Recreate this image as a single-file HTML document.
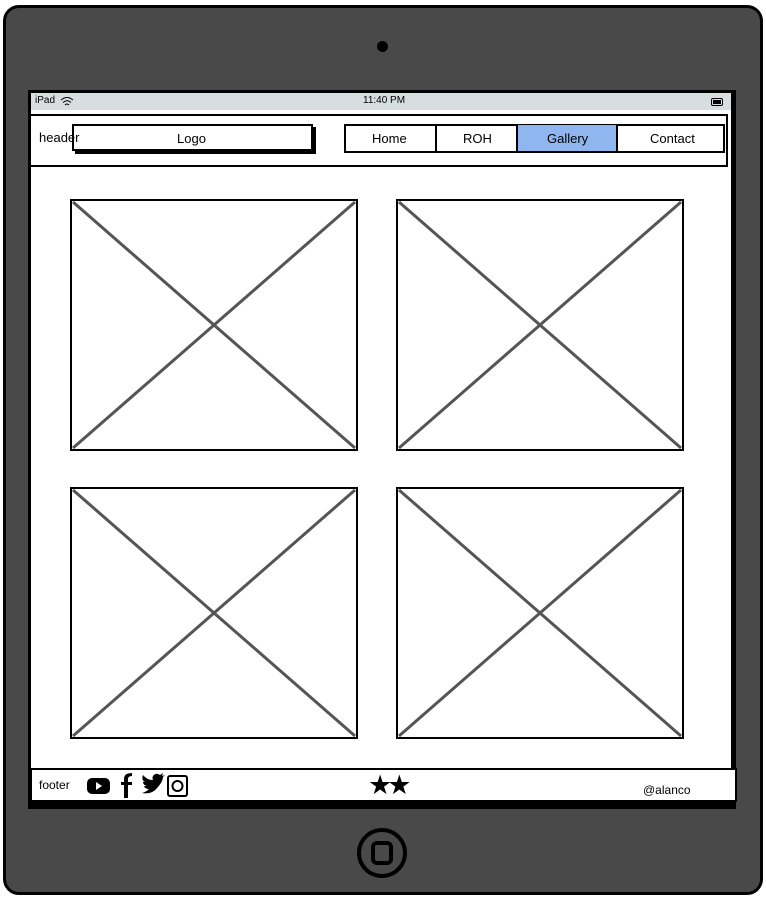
<!DOCTYPE html>
<html><head><style>
body{margin:0;width:766px;height:898px;background:#fff;position:relative;overflow:hidden;font-family:"Liberation Sans",sans-serif;}
.a{position:absolute;box-sizing:border-box;}
.t{position:absolute;font-size:13px;color:#000;}
</style></head><body>
<div class="a" style="left:3px;top:5px;width:760px;height:890px;background:#494949;border:3px solid #000;border-radius:16px;"></div>
<div class="a" style="left:377px;top:41px;width:11px;height:11px;background:#000;border-radius:50%;"></div>
<div class="a" style="left:28px;top:90px;width:708px;height:719px;background:#000;"></div>
<div class="a" style="left:31px;top:93px;width:700px;height:709px;background:#fff;"></div>
<div class="a" style="left:31px;top:93px;width:700px;height:17px;background:#d8dde0;"></div>
<div class="t" style="left:35px;top:95px;font-size:10px;">iPad</div>
<svg class="a" style="left:59px;top:95px" width="16" height="12"><path d="M2 5 Q8 0 14 5 M4 7.5 Q8 4 12 7.5 M6 10 Q8 8 10 10" stroke="#000" fill="none" stroke-width="1"/></svg>
<div class="t" style="left:363px;top:95px;font-size:10px;">11:40 PM</div>
<div class="a" style="left:711px;top:98px;width:12px;height:8px;border:1px solid #000;border-radius:2px;"><div style="margin:1px;height:4px;background:#000"></div></div>
<div class="a" style="left:29px;top:114px;width:699px;height:53px;border:2px solid #000;background:#fff;"></div>
<div class="a" style="left:75px;top:127px;width:241px;height:27px;background:#000;"></div>
<div class="a" style="left:72px;top:124px;width:241px;height:27px;border:2px solid #000;background:#fff;"></div>
<div class="t" style="left:39px;top:130px;">header</div>
<div class="t" style="left:177px;top:131px;">Logo</div>
<div class="a" style="left:344px;top:124px;width:381px;height:29px;border:2px solid #000;background:#fff;"></div>
<div class="a" style="left:517px;top:125px;width:100px;height:26px;background:#8fb6ef;"></div>
<div class="a" style="left:435px;top:124px;width:2px;height:29px;background:#000;"></div>
<div class="a" style="left:516px;top:124px;width:2px;height:29px;background:#000;"></div>
<div class="a" style="left:616px;top:124px;width:2px;height:29px;background:#000;"></div>
<div class="t" style="left:372px;top:131px;">Home</div>
<div class="t" style="left:463px;top:131px;">ROH</div>
<div class="t" style="left:547px;top:131px;">Gallery</div>
<div class="t" style="left:650px;top:131px;">Contact</div>
<svg class="a" style="left:0;top:0" width="766" height="898">
<g stroke="#555" stroke-width="3" fill="none">
<path d="M73 202L355 448M355 202L73 448M399 202L681 448M681 202L399 448M73 490L355 736M355 490L73 736M399 490L681 736M681 490L399 736"/>
</g>
<g stroke="#000" stroke-width="2" fill="none">
<rect x="71" y="200" width="286" height="250"/><rect x="397" y="200" width="286" height="250"/>
<rect x="71" y="488" width="286" height="250"/><rect x="397" y="488" width="286" height="250"/>
</g>
<circle cx="382" cy="853" r="23" stroke="#000" stroke-width="4" fill="none"/>
<rect x="373" y="843" width="18" height="20" rx="4" stroke="#000" stroke-width="4" fill="none"/>
</svg>
<div class="a" style="left:30px;top:768px;width:707px;height:34px;border:2px solid #000;background:#fff;"></div>
<div class="t" style="left:39px;top:778px;font-size:12px;">footer</div>
<svg class="a" style="left:86px;top:773px" width="105" height="26">
<rect x="1" y="5" width="23" height="16" rx="5" fill="#000"/><path d="M10 9L16 13L10 17Z" fill="#fff"/>
<path d="M42 25V12H46V9H42V6Q42 3 46 3V0Q38 0 38 6V9H35V12H38V25Z" fill="#000"/>
<path d="M56 20Q66 22 72 14Q77 8 77 4L79 2L76 3L77 0L74 2Q70 -1 67 3Q66 5 67 7Q61 7 57 2Q55 7 59 9L57 9Q57 12 61 13L58 13Q59 16 63 16Q60 19 56 20Z" fill="#000"/>
<rect x="82" y="3" width="19" height="20" rx="2" stroke="#000" stroke-width="2" fill="none"/><circle cx="91.5" cy="13" r="5" stroke="#000" stroke-width="2" fill="none"/>
</svg>
<div class="t" style="left:368px;top:770px;font-size:27px;letter-spacing:-5px;">★★</div>
<div class="t" style="left:643px;top:783px;font-size:12px;">@alanco</div>
</body></html>
